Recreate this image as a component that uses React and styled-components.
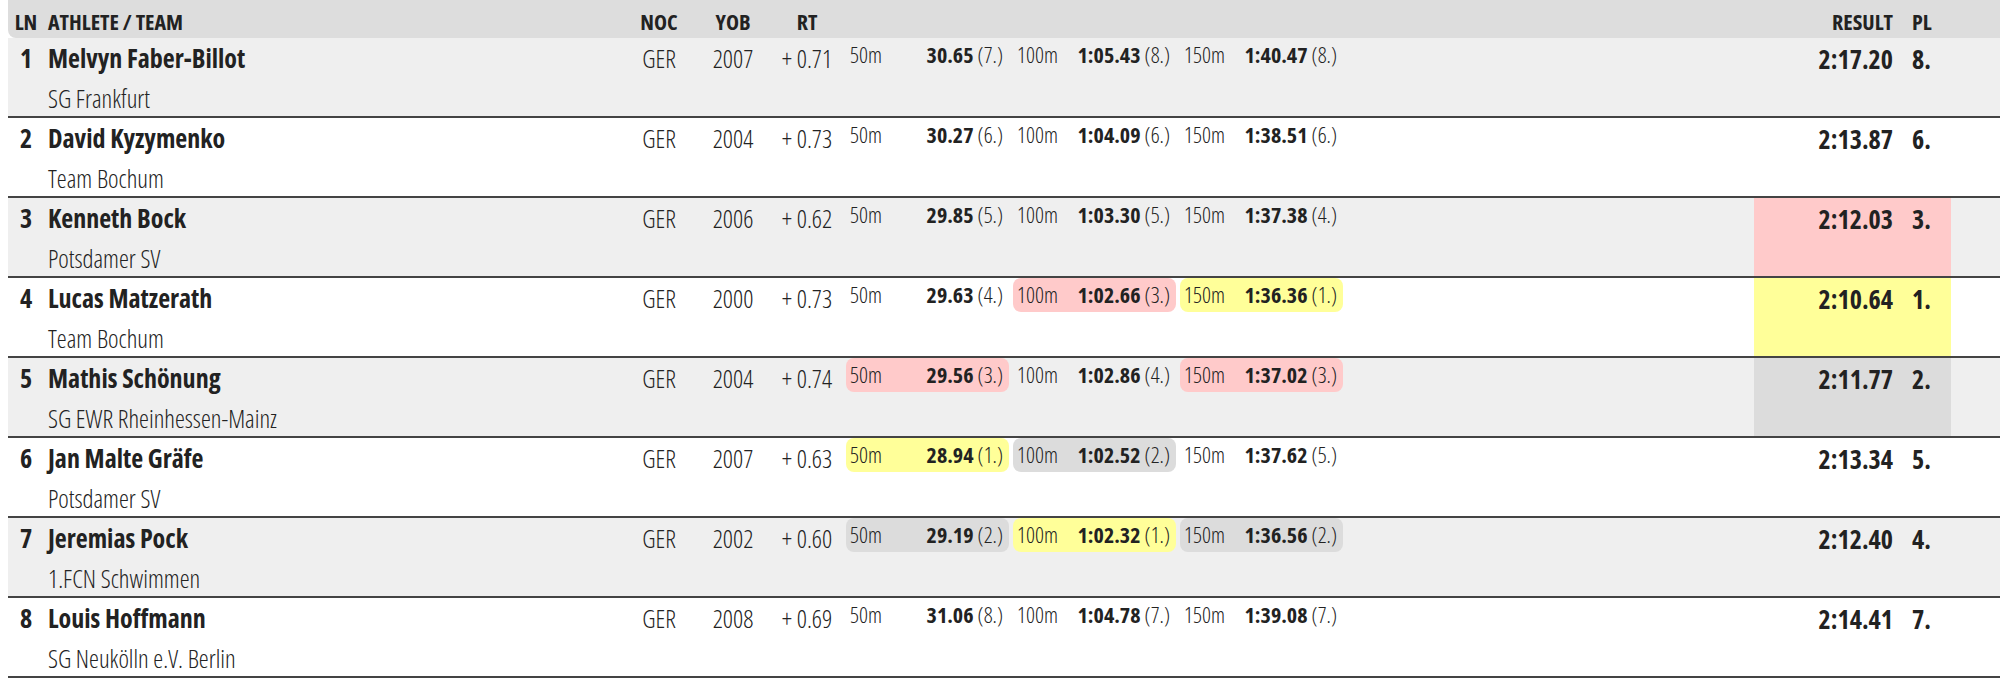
import React from 'react';
import styled, { createGlobalStyle } from 'styled-components';

const GlobalStyle = createGlobalStyle`
	html, body {
		margin: 0;
		padding: 0;
		background: #fff;
	}

	body {
		padding-left: 8px;
		font-family: 'Open Sans', 'Liberation Sans', sans-serif;
		font-stretch: 75%;
		color: #222;
		overflow: hidden;
	}
`;

const results = [
	{ ln: 1, name: 'Melvyn Faber-Billot', team: 'SG Frankfurt', yob: 2007, rt: '0.71', splits: [['30.65', 7], ['1:05.43', 8], ['1:40.47', 8]], time: '2:17.20', pl: 8 },
	{ ln: 2, name: 'David Kyzymenko', team: 'Team Bochum', yob: 2004, rt: '0.73', splits: [['30.27', 6], ['1:04.09', 6], ['1:38.51', 6]], time: '2:13.87', pl: 6 },
	{ ln: 3, name: 'Kenneth Bock', team: 'Potsdamer SV', yob: 2006, rt: '0.62', splits: [['29.85', 5], ['1:03.30', 5], ['1:37.38', 4]], time: '2:12.03', pl: 3 },
	{ ln: 4, name: 'Lucas Matzerath', team: 'Team Bochum', yob: 2000, rt: '0.73', splits: [['29.63', 4], ['1:02.66', 3], ['1:36.36', 1]], time: '2:10.64', pl: 1 },
	{ ln: 5, name: 'Mathis Schönung', team: 'SG EWR Rheinhessen-Mainz', yob: 2004, rt: '0.74', splits: [['29.56', 3], ['1:02.86', 4], ['1:37.02', 3]], time: '2:11.77', pl: 2 },
	{ ln: 6, name: 'Jan Malte Gräfe', team: 'Potsdamer SV', yob: 2007, rt: '0.63', splits: [['28.94', 1], ['1:02.52', 2], ['1:37.62', 5]], time: '2:13.34', pl: 5 },
	{ ln: 7, name: 'Jeremias Pock', team: '1.FCN Schwimmen', yob: 2002, rt: '0.60', splits: [['29.19', 2], ['1:02.32', 1], ['1:36.56', 2]], time: '2:12.40', pl: 4 },
	{ ln: 8, name: 'Louis Hoffmann', team: 'SG Neukölln e.V. Berlin', yob: 2008, rt: '0.69', splits: [['31.06', 8], ['1:04.78', 7], ['1:39.08', 7]], time: '2:14.41', pl: 7 },
];

const distances = ['50m', '100m', '150m'];

// highlight colours for the top three places
const medal = {
	1: '#ffff99',
	2: '#dcdcdc',
	3: '#ffcaca',
};

export default function App() {
	return (
		<>
			<GlobalStyle />
			<Table>
				<HeaderRow>
					<HeadCell align="center">LN</HeadCell>
					<HeadCell indent>ATHLETE / TEAM</HeadCell>
					<HeadCell align="center">NOC</HeadCell>
					<HeadCell align="center">YOB</HeadCell>
					<HeadCell align="center">RT</HeadCell>
					<div />
					<HeadResult>
						<ResultTime>RESULT</ResultTime>
						<Place>PL</Place>
					</HeadResult>
					<div />
				</HeaderRow>
				{results.map((r) => (
					<Row key={r.ln} striped={r.ln % 2 === 1}>
						<Lane>{r.ln}</Lane>
						<Athlete>
							<Name>{r.name}</Name>
							<Team>{r.team}</Team>
						</Athlete>
						<InfoCell>GER</InfoCell>
						<InfoCell>{r.yob}</InfoCell>
						<InfoCell>+ {r.rt}</InfoCell>
						<Splits>
							{r.splits.map(([t, rank], i) => (
								<Split key={i} bg={medal[rank]}>
									<SplitLabel>{distances[i]}</SplitLabel>
									<SplitValue>
										<b>{t}</b> ({rank}.)
									</SplitValue>
								</Split>
							))}
						</Splits>
						<ResultCell bg={medal[r.pl]}>
							<ResultTime>{r.time}</ResultTime>
							<Place>{r.pl}.</Place>
						</ResultCell>
						<div />
					</Row>
				))}
			</Table>
		</>
	);
}

const columns = '36px 576px 78px 70px 78px 908px 197px 1fr';

const Table = styled.div`
	width: 1992px;
`;

const HeaderRow = styled.div`
	display: grid;
	grid-template-columns: ${columns};
	height: 38px;
	align-items: end;
	padding-bottom: 4px;
	box-sizing: border-box;
	background: #dddddd;
	border-bottom-left-radius: 8px;
	font-size: 22px;
	font-weight: 700;
	line-height: 26px;
`;

const HeadCell = styled.div`
	text-align: ${({ align }) => align || 'left'};
	padding-left: ${({ indent }) => (indent ? '4px' : '0')};
`;

const HeadResult = styled.div`
	display: grid;
	grid-template-columns: 139px 39px;
	column-gap: 19px;
`;

const Row = styled.div`
	display: grid;
	grid-template-columns: ${columns};
	height: 80px;
	box-sizing: border-box;
	border-bottom: 2px solid #444;
	background: ${({ striped }) => (striped ? '#efefef' : '#fff')};
`;

const Lane = styled.div`
	text-align: center;
	font-weight: 700;
	font-size: 26px;
	line-height: 30px;
	padding-top: 5px;
`;

const Athlete = styled.div`
	padding: 5px 0 0 4px;
	display: flex;
	flex-direction: column;
	gap: 10px;
`;

const Name = styled.div`
	font-size: 26px;
	font-weight: 700;
	line-height: 30px;
`;

const Team = styled.div`
	font-size: 25px;
	font-weight: 300;
	line-height: 30px;
`;

const InfoCell = styled.div`
	text-align: center;
	font-size: 25px;
	font-weight: 300;
	line-height: 30px;
	padding-top: 5px;
`;

const Splits = styled.div`
	display: flex;
	gap: 4px;
	align-items: flex-start;
`;

const Split = styled.div`
	width: 163px;
	height: 34px;
	box-sizing: border-box;
	display: flex;
	justify-content: space-between;
	align-items: flex-start;
	padding: 3px 6px 0 4px;
	border-radius: 8px;
	background: ${({ bg }) => bg || 'transparent'};
	font-size: 22px;
	line-height: 26px;
`;

const SplitLabel = styled.span`
	font-weight: 300;
`;

const SplitValue = styled.span`
	font-weight: 300;

	b {
		font-weight: 700;
	}
`;

const ResultCell = styled.div`
	display: grid;
	grid-template-columns: 139px 39px;
	column-gap: 19px;
	align-items: start;
	background: ${({ bg }) => bg || 'transparent'};
	font-weight: 700;
	font-size: 26px;
	line-height: 30px;
	padding-top: 6px;
`;

const ResultTime = styled.div`
	text-align: right;
`;

const Place = styled.div`
	text-align: left;
`;
